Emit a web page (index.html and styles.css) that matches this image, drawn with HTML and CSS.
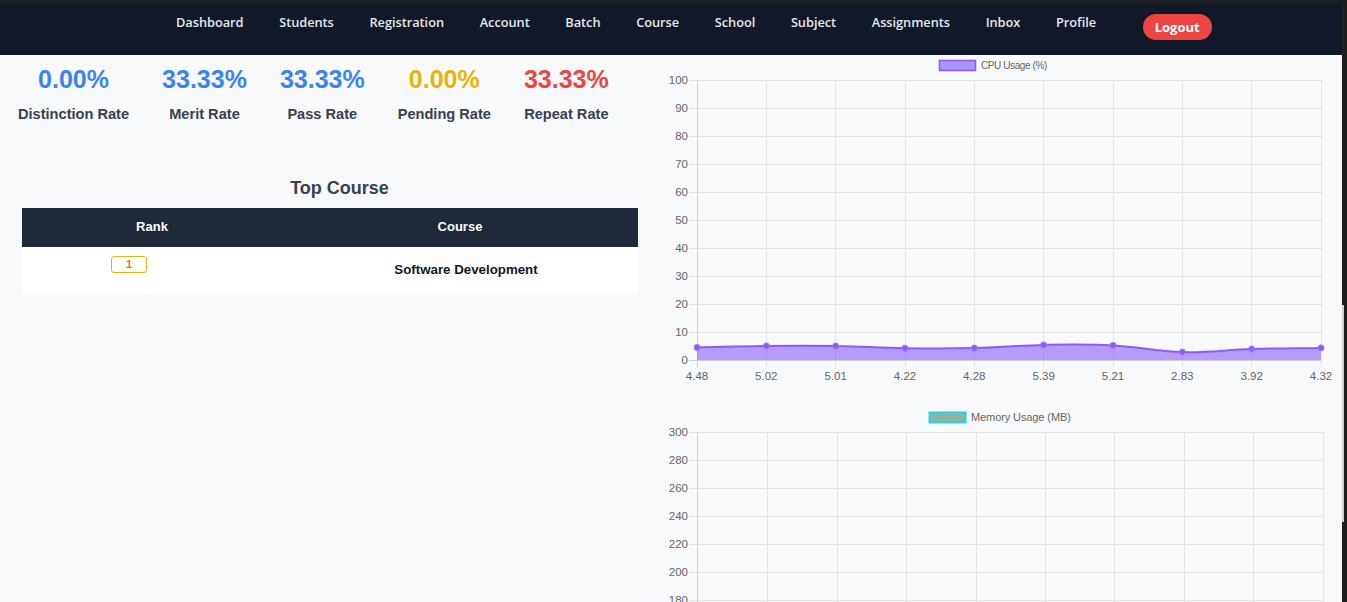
FILE: index.html
```html
<!DOCTYPE html>
<html lang="en">
<head>
<meta charset="utf-8">
<title>Dashboard</title>
<link rel="stylesheet" href="styles.css">
</head>
<body>
<nav class="navbar">
  <a class="nav-link">Dashboard</a>
  <a class="nav-link">Students</a>
  <a class="nav-link">Registration</a>
  <a class="nav-link">Account</a>
  <a class="nav-link">Batch</a>
  <a class="nav-link">Course</a>
  <a class="nav-link">School</a>
  <a class="nav-link">Subject</a>
  <a class="nav-link">Assignments</a>
  <a class="nav-link">Inbox</a>
  <a class="nav-link">Profile</a>
  <button class="logout">Logout</button>
</nav>

<main class="main">
  <section class="left">
    <div class="stats">
      <div class="stat"><div class="stat-value blue">0.00%</div><div class="stat-label">Distinction Rate</div></div>
      <div class="stat"><div class="stat-value blue">33.33%</div><div class="stat-label">Merit Rate</div></div>
      <div class="stat"><div class="stat-value blue">33.33%</div><div class="stat-label">Pass Rate</div></div>
      <div class="stat"><div class="stat-value yellow">0.00%</div><div class="stat-label">Pending Rate</div></div>
      <div class="stat"><div class="stat-value red">33.33%</div><div class="stat-label">Repeat Rate</div></div>
    </div>

    <h2 class="section-title">Top Course</h2>
    <div class="table">
      <div class="thead">
        <div class="th">Rank</div>
        <div class="th">Course</div>
      </div>
      <div class="trow">
        <div class="td td-rank"><span class="badge">1</span></div>
        <div class="td td-course">Software Development</div>
      </div>
    </div>
  </section>

  <section class="right">
    <svg class="chart chart-cpu" width="693" height="345" viewBox="650 55 693 345" font-family="Liberation Sans, Arial, sans-serif">
      <rect x="939.5" y="60.5" width="36" height="10" fill="#ab94f9" stroke="#8b5cf6" stroke-width="1.6"/>
      <text x="981" y="69" font-size="10" fill="#666" letter-spacing="-0.4">CPU Usage (%)</text>
      <g stroke="#e3e4e6" stroke-width="1">
        <line x1="689" y1="80.5" x2="1321" y2="80.5"/>
        <line x1="689" y1="108.5" x2="1321" y2="108.5"/>
        <line x1="689" y1="136.5" x2="1321" y2="136.5"/>
        <line x1="689" y1="164.5" x2="1321" y2="164.5"/>
        <line x1="689" y1="192.5" x2="1321" y2="192.5"/>
        <line x1="689" y1="220.5" x2="1321" y2="220.5"/>
        <line x1="689" y1="248.5" x2="1321" y2="248.5"/>
        <line x1="689" y1="276.5" x2="1321" y2="276.5"/>
        <line x1="689" y1="304.5" x2="1321" y2="304.5"/>
        <line x1="689" y1="332.5" x2="1321" y2="332.5"/>
        <line x1="766.5" y1="80" x2="766.5" y2="368"/>
        <line x1="835.5" y1="80" x2="835.5" y2="368"/>
        <line x1="905.5" y1="80" x2="905.5" y2="368"/>
        <line x1="974.5" y1="80" x2="974.5" y2="368"/>
        <line x1="1043.5" y1="80" x2="1043.5" y2="368"/>
        <line x1="1113.5" y1="80" x2="1113.5" y2="368"/>
        <line x1="1182.5" y1="80" x2="1182.5" y2="368"/>
        <line x1="1251.5" y1="80" x2="1251.5" y2="368"/>
        <line x1="1321.5" y1="80" x2="1321.5" y2="368"/>
      </g>
      <g stroke="#cfd0d2" stroke-width="1">
        <line x1="697.5" y1="80" x2="697.5" y2="368"/>
        <line x1="689" y1="360.5" x2="1321" y2="360.5"/>
      </g>
      <g font-size="11.5" fill="#666" text-anchor="end">
        <text x="688" y="84">100</text>
        <text x="688" y="112">90</text>
        <text x="688" y="140">80</text>
        <text x="688" y="168">70</text>
        <text x="688" y="196">60</text>
        <text x="688" y="224">50</text>
        <text x="688" y="252">40</text>
        <text x="688" y="280">30</text>
        <text x="688" y="308">20</text>
        <text x="688" y="336">10</text>
        <text x="688" y="364">0</text>
      </g>
      <g font-size="11.5" fill="#666" text-anchor="middle">
        <text x="697" y="380">4.48</text>
        <text x="766.3" y="380">5.02</text>
        <text x="835.7" y="380">5.01</text>
        <text x="905" y="380">4.22</text>
        <text x="974.3" y="380">4.28</text>
        <text x="1043.7" y="380">5.39</text>
        <text x="1113" y="380">5.21</text>
        <text x="1182.3" y="380">2.83</text>
        <text x="1251.7" y="380">3.92</text>
        <text x="1321" y="380">4.32</text>
      </g>
      <path fill="rgba(139,92,246,0.6)" d="M697,347.46 C724.73,346.85 738.6,346.24 766.33,345.94 C794.06,345.64 807.94,345.52 835.67,345.97 C863.4,346.42 877.27,347.77 905,348.18 C932.73,348.59 946.6,348.67 974.33,348.02 C1002.06,347.37 1015.94,345.43 1043.67,344.91 C1071.4,344.39 1085.27,343.98 1113,345.41 C1140.73,346.84 1154.6,351.36 1182.33,352.08 C1210.06,352.8 1223.94,349.86 1251.67,349.02 C1279.4,348.18 1293.27,348.35 1321,347.9 L1321,360 L697,360 Z"/>
      <path fill="none" stroke="#8b5cf6" stroke-width="2" d="M697,347.46 C724.73,346.85 738.6,346.24 766.33,345.94 C794.06,345.64 807.94,345.52 835.67,345.97 C863.4,346.42 877.27,347.77 905,348.18 C932.73,348.59 946.6,348.67 974.33,348.02 C1002.06,347.37 1015.94,345.43 1043.67,344.91 C1071.4,344.39 1085.27,343.98 1113,345.41 C1140.73,346.84 1154.6,351.36 1182.33,352.08 C1210.06,352.8 1223.94,349.86 1251.67,349.02 C1279.4,348.18 1293.27,348.35 1321,347.9"/>
      <g fill="#8b5cf6" stroke="#9f7af7" stroke-width="1">
        <circle cx="697" cy="347.46" r="3"/>
        <circle cx="766.33" cy="345.94" r="3"/>
        <circle cx="835.67" cy="345.97" r="3"/>
        <circle cx="905" cy="348.18" r="3"/>
        <circle cx="974.33" cy="348.02" r="3"/>
        <circle cx="1043.67" cy="344.91" r="3"/>
        <circle cx="1113" cy="345.41" r="3"/>
        <circle cx="1182.33" cy="352.08" r="3"/>
        <circle cx="1251.67" cy="349.02" r="3"/>
        <circle cx="1321" cy="347.9" r="3"/>
      </g>
    </svg>

    <svg class="chart chart-mem" width="693" height="240" viewBox="650 400 693 240" font-family="Liberation Sans, Arial, sans-serif">
      <rect x="929.5" y="412.5" width="36" height="10" fill="#8fb3a3" stroke="#22d3ee" stroke-width="2"/>
      <text x="971" y="421" font-size="11" fill="#666" letter-spacing="-0.1">Memory Usage (MB)</text>
      <g stroke="#e3e4e6" stroke-width="1">
        <line x1="689" y1="432.5" x2="1323" y2="432.5"/>
        <line x1="689" y1="460.5" x2="1323" y2="460.5"/>
        <line x1="689" y1="488.5" x2="1323" y2="488.5"/>
        <line x1="689" y1="516.5" x2="1323" y2="516.5"/>
        <line x1="689" y1="544.5" x2="1323" y2="544.5"/>
        <line x1="689" y1="572.5" x2="1323" y2="572.5"/>
        <line x1="689" y1="600.5" x2="1323" y2="600.5"/>
        <line x1="689" y1="628.5" x2="1323" y2="628.5"/>
        <line x1="767.5" y1="432" x2="767.5" y2="640"/>
        <line x1="837.5" y1="432" x2="837.5" y2="640"/>
        <line x1="906.5" y1="432" x2="906.5" y2="640"/>
        <line x1="976.5" y1="432" x2="976.5" y2="640"/>
        <line x1="1045.5" y1="432" x2="1045.5" y2="640"/>
        <line x1="1114.5" y1="432" x2="1114.5" y2="640"/>
        <line x1="1184.5" y1="432" x2="1184.5" y2="640"/>
        <line x1="1253.5" y1="432" x2="1253.5" y2="640"/>
        <line x1="1323.5" y1="432" x2="1323.5" y2="640"/>
      </g>
      <line x1="697.5" y1="432" x2="697.5" y2="640" stroke="#cfd0d2" stroke-width="1"/>
      <g font-size="11.5" fill="#666" text-anchor="end">
        <text x="688" y="436">300</text>
        <text x="688" y="464">280</text>
        <text x="688" y="492">260</text>
        <text x="688" y="520">240</text>
        <text x="688" y="548">220</text>
        <text x="688" y="576">200</text>
        <text x="688" y="604">180</text>
        <text x="688" y="632">160</text>
      </g>
    </svg>
  </section>
</main>

<div class="scrollbar"><div class="scroll-thumb"></div></div>
</body>
</html>
```

FILE: styles.css
```css
* { box-sizing: border-box; }

html, body {
  margin: 0;
  padding: 0;
  height: 100%;
  overflow: hidden;
}

body {
  background: #f8f9fb;
  font-family: "Liberation Sans", Arial, sans-serif;
  color: #374151;
}

.navbar {
  height: 55px;
  background: #111827;
  border-top: 3px solid #1c1d20;
  display: flex;
  align-items: flex-start;
  padding: 10px 0 0 176px;
  gap: 35.65px;
}

.nav-link {
  font-family: "Open Sans", "Liberation Sans", sans-serif;
  font-weight: 600;
  font-size: 12.8px;
  letter-spacing: -0.04px;
  line-height: 18px;
  color: #e5e7eb;
  text-decoration: none;
  white-space: nowrap;
}

.logout {
  margin: 1px 0 0 11px;
  height: 26px;
  padding: 0 12px;
  border: none;
  border-radius: 13px;
  background: #ef4444;
  color: #fff;
  font-family: "Open Sans", "Liberation Sans", sans-serif;
  font-weight: 700;
  font-size: 13px;
  line-height: 26px;
}

.main {
  display: flex;
  padding-right: 4px;
}

.left {
  width: 650px;
  flex: none;
  padding-top: 10px;
}

.stats {
  display: flex;
  gap: 33px;
  padding-left: 18px;
}

.stat {
  display: flex;
  flex-direction: column;
  align-items: center;
}

.stat-value {
  font-size: 25px;
  font-weight: 700;
  line-height: 28px;
}

.stat-label {
  margin-top: 11px;
  font-size: 14.6px;
  font-weight: 700;
  line-height: 20px;
  color: #374151;
}

.blue { color: #3b82f6; }
.yellow { color: #eab308; }
.red { color: #ef4444; }

.section-title {
  margin: 52px 0 8px 0;
  padding-left: 41px;
  width: 638px;
  text-align: center;
  font-size: 18px;
  line-height: 24px;
  font-weight: 700;
  color: #374151;
}

.table {
  margin-left: 22px;
  width: 616px;
}

.thead, .trow {
  display: grid;
  grid-template-columns: 260px 1fr;
}

.thead {
  background: #1f2937;
  height: 39px;
}

.th {
  color: #fff;
  font-size: 13px;
  font-weight: 700;
  display: flex;
  align-items: center;
  justify-content: center;
  padding-bottom: 2px;
}

.trow {
  background: #fff;
  height: 46px;
}

.td-rank {
  display: flex;
  justify-content: center;
  align-items: flex-start;
  padding: 9px 46px 0 0;
}

.badge {
  display: inline-block;
  width: 36px;
  height: 17px;
  border: 1px solid #eab308;
  border-radius: 3px;
  color: #ca8a04;
  font-size: 11px;
  font-weight: 700;
  line-height: 15px;
  text-align: center;
}

.td-course {
  display: flex;
  align-items: center;
  justify-content: center;
  padding: 0 0 2px 12px;
  font-size: 13.3px;
  font-weight: 700;
  color: #111827;
}

.right {
  flex: 1;
  display: flex;
  flex-direction: column;
}

.chart {
  display: block;
  flex: none;
}

.scrollbar {
  position: fixed;
  top: 0;
  right: 0;
  bottom: 0;
  width: 5px;
  background: #1f1f1f;
}

.scroll-thumb {
  position: absolute;
  top: 305px;
  left: 0;
  width: 2px;
  height: 217px;
  background: #d0d0d0;
}
```
